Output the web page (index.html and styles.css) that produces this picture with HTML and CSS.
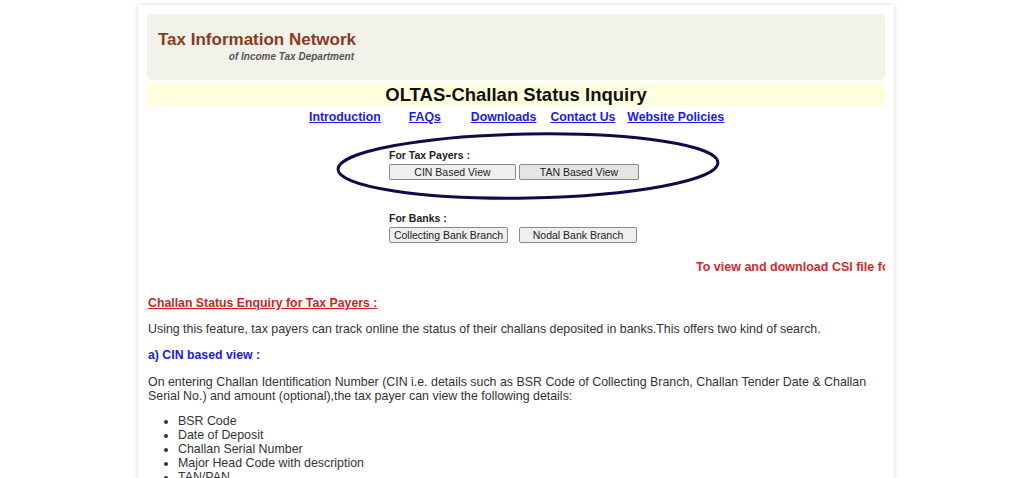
FILE: index.html
```html
<!DOCTYPE html>
<html lang="en">
<head>
    <meta charset="UTF-8" />
    <title>OLTAS - Challan Status Inquiry</title>
    <link rel="stylesheet" href="styles.css">
</head>
<body>
    <div class="frame">
        <div class="tin-header">
            <div class="tin-title">Tax Information Network</div>
            <div class="tin-sub">of Income Tax Department</div>
        </div>

        <div class="page-title">OLTAS-Challan Status Inquiry</div>

        <div class="top-links">
            <a href="#">Introduction</a>
            <a href="#">FAQs</a>
            <a href="#">Downloads</a>
            <a href="#">Contact Us</a>
            <a href="#">Website Policies</a>
        </div>

        <div class="view-group group-payers">
            <div class="group-label">For Tax Payers :</div>
            <div class="btn-row">
                <button class="btn btn-cin">CIN Based View</button>
                <button class="btn btn-tan">TAN Based View</button>
            </div>
        </div>

        <div class="view-group group-banks">
            <div class="group-label">For Banks :</div>
            <div class="btn-row">
                <button class="btn btn-collect">Collecting Bank Branch</button>
                <button class="btn btn-nodal">Nodal Bank Branch</button>
            </div>
        </div>

        <div class="csi-note"><span>To view and download CSI file for the bank branch click on the link</span></div>

        <div class="section-head">Challan Status Enquiry for Tax Payers :</div>
        <p class="para">Using this feature, tax payers can track online the status of their challans deposited in banks.This offers two kind of search.</p>

        <div class="sub-head">a) CIN based view :</div>
        <p class="para para-cin">On entering Challan Identification Number (CIN i.e. details such as BSR Code of Collecting Branch, Challan Tender Date &amp; Challan Serial No.) and amount (optional),the tax payer can view the following details:</p>

        <ul class="details">
            <li>BSR Code</li>
            <li>Date of Deposit</li>
            <li>Challan Serial Number</li>
            <li>Major Head Code with description</li>
            <li>TAN/PAN</li>
            <li>Name of Tax Payer</li>
        </ul>

        <!-- hand drawn mark around the tax payer buttons -->
        <svg class="circle-mark" width="400" height="80" viewBox="0 0 400 80">
            <ellipse cx="198" cy="40" rx="190" ry="32" transform="rotate(-1 198 40)"
                     fill="none" stroke="#0c0c4a" stroke-width="3"/>
        </svg>
    </div>
</body>
</html>
```

FILE: styles.css
```css
body {
    margin: 0;
    background: #ffffff;
    font-family: "Liberation Sans", Arial, sans-serif;
    color: #333;
    overflow: hidden;
}

.frame {
    position: relative;
    width: 738px;
    margin: 5px 0 0 138px;
    padding: 9px 9px 0 9px;
    height: 500px;
    background: #fff;
    box-shadow: 0 0 4px rgba(0, 0, 0, 0.18);
    overflow: hidden;
}

/* --- Kopfbereich --- */

.tin-header {
    height: 66px;
    background: #f2f1ea;
    border-radius: 4px;
    box-sizing: border-box;
    padding: 16px 0 0 11px;
}

.tin-title {
    font-size: 17px;
    font-weight: bold;
    color: #8a3c22;
    line-height: 20px;
}

.tin-sub {
    width: 196px;
    text-align: right;
    font-size: 10px;
    font-weight: bold;
    font-style: italic;
    color: #555;
    line-height: 13px;
}

.page-title {
    margin-top: 3px;
    height: 23px;
    line-height: 24px;
    background: #ffffdd;
    text-align: center;
    font-size: 18.5px;
    font-weight: bold;
    color: #111;
}

.top-links {
    display: flex;
    margin-top: 4px;
    padding-left: 162px;
    line-height: 15px;
    font-size: 12.3px;
    font-weight: bold;
}

.top-links a {
    color: #1a1aee;
}

.top-links a:nth-child(1) { margin-right: 28px; }
.top-links a:nth-child(2) { margin-right: 30px; }
.top-links a:nth-child(3) { margin-right: 14px; }
.top-links a:nth-child(4) { margin-right: 12px; }

/* --- Auswahl-Buttons --- */

.view-group {
    padding-left: 242px;
}

.group-payers {
    margin-top: 24px;
}

.group-banks {
    margin-top: 32px;
}

.group-label {
    font-size: 10.5px;
    font-weight: bold;
    color: #222;
    line-height: 12px;
}

.btn-row {
    display: flex;
    margin-top: 3px;
}

.btn {
    height: 16px;
    padding: 0;
    margin: 0;
    font-family: "Liberation Sans", Arial, sans-serif;
    font-size: 10.5px;
    color: #222;
    background: #efefef;
    border: 1px solid #8a8a8a;
    border-radius: 2px;
    line-height: 14px;
}

.btn-cin { width: 127px; }
.btn-tan { width: 120px; margin-left: 3px; background: #e5e5e5; }
.btn-collect { width: 119px; }
.btn-nodal { width: 118px; margin-left: 11px; }

.csi-note {
    margin-top: 17px;
    padding-left: 549px;
    white-space: nowrap;
    overflow: hidden;
    font-size: 12.5px;
    font-weight: bold;
    color: #d42a2a;
    line-height: 15px;
}

/* --- Textbereich --- */

.section-head {
    margin-top: 21px;
    padding-left: 1px;
    font-size: 12.3px;
    font-weight: bold;
    color: #cc1f1f;
    text-decoration: underline;
    line-height: 15px;
}

.para {
    margin: 11px 0 0 1px;
    font-size: 12.4px;
    line-height: 14px;
    color: #333;
}

.sub-head {
    margin-top: 12px;
    padding-left: 1px;
    font-size: 12.3px;
    font-weight: bold;
    color: #1a1aee;
    line-height: 15px;
}

.para-cin {
    margin-top: 12px;
}

.details {
    margin: 11px 0 0 0;
    padding-left: 31px;
    font-size: 12.4px;
    line-height: 14px;
    color: #333;
}

.circle-mark {
    position: absolute;
    left: 192px;
    top: 121px;
}
```
